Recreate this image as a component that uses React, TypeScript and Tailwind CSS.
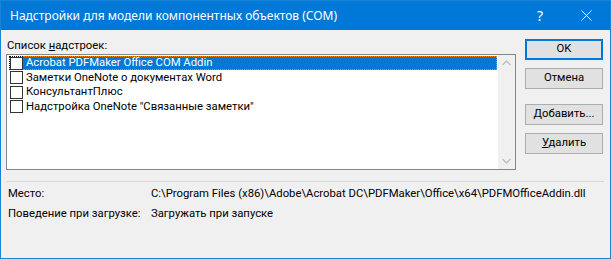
import React from "react";

const font = { fontFamily: 'Roboto, "Noto Sans", "Liberation Sans", sans-serif' };
const titleFont = { fontFamily: '"Noto Sans", "Liberation Sans", sans-serif' };

function Check() {
  return <div className="w-[13px] h-[13px] border border-[#333333] bg-white shrink-0" />;
}

function Btn({ children, def }: { children: React.ReactNode; def?: boolean }) {
  return (
    <div
      className={
        "w-[78px] h-[21px] flex items-center justify-center bg-[#e1e1e1] text-black whitespace-nowrap " +
        (def ? "border-2 border-[#0078d7]" : "border border-[#adadad]")
      }
    >
      {children}
    </div>
  );
}

export default function App() {
  const items = [
    "Заметки OneNote о документах Word",
    "КонсультантПлюс",
    'Надстройка OneNote "Связанные заметки"',
  ];
  return (
    <div
      className="w-[611px] h-[259px] border border-[#1883d7] bg-[#f0f0f0] flex flex-col overflow-hidden text-[11.3px] text-black whitespace-nowrap"
      style={font}
    >
      {/* Title bar */}
      <div className="h-[29px] bg-[#0078d7] flex items-center text-white shrink-0" style={titleFont}>
        <div className="pl-[9px] text-[12px] leading-[16px] pt-[1px]">
          Надстройки для модели компонентных объектов (COM)
        </div>
        <div className="flex-1" />
        <div className="w-[46px] h-[29px] flex items-center justify-center text-[14px]">?</div>
        <div className="w-[46px] h-[29px] flex items-center justify-center mr-[1px]">
          <svg width="11" height="11" viewBox="0 0 11 11">
            <path d="M0.5 0.5 L10.5 10.5 M10.5 0.5 L0.5 10.5" stroke="white" strokeWidth="1" />
          </svg>
        </div>
      </div>

      {/* Body */}
      <div className="flex pl-[5px] pt-[8px] shrink-0">
        <div className="flex flex-col">
          <div className="h-[16px] leading-[16px] pl-[1px]">
            Список <span className="underline">н</span>адстроек:
          </div>
          <div className="w-[510px] h-[116px] border border-[#828790] bg-white flex">
            <div className="flex-1 pt-[1px] pl-[2px] flex flex-col">
              <div className="h-[14.5px] flex items-center">
                <div className="h-[14px] flex items-center border border-dotted border-black border-r-0">
                  <Check />
                </div>
                <div className="flex-1 h-[14px] bg-[#0078d7] text-white flex items-center pl-[3px] border border-dotted border-[#ff8c00] border-l-0 leading-[12px] mr-[1px]">
                  Acrobat PDFMaker Office COM Addin
                </div>
              </div>
              {items.map((t) => (
                <div key={t} className="h-[14.5px] flex items-center">
                  <div className="pl-[1px]">
                    <Check />
                  </div>
                  <div className="pl-[3px] leading-[14px]">{t}</div>
                </div>
              ))}
            </div>
            <div className="w-[17px] bg-[#f0f0f0] flex flex-col items-center justify-between py-[5px]">
              <svg width="9" height="6" viewBox="0 0 9 6">
                <path d="M0.5 5 L4.5 1 L8.5 5" stroke="#c0c0c0" strokeWidth="1.5" fill="none" />
              </svg>
              <svg width="9" height="6" viewBox="0 0 9 6">
                <path d="M0.5 1 L4.5 5 L8.5 1" stroke="#c0c0c0" strokeWidth="1.5" fill="none" />
              </svg>
            </div>
          </div>
        </div>
        <div className="flex flex-col ml-[9px] pt-[1px]">
          <Btn def>OK</Btn>
          <div className="h-[8px]" />
          <Btn>Отмена</Btn>
          <div className="h-[15px]" />
          <Btn>
            <span>
              <span className="underline">Д</span>обавить...
            </span>
          </Btn>
          <div className="h-[8px]" />
          <Btn>
            <span>
              <span className="underline">У</span>далить
            </span>
          </Btn>
        </div>
      </div>

      {/* Separator */}
      <div className="mx-[6px] mt-[11px] h-px bg-[#d7d7d7] shrink-0" />

      {/* Info */}
      <div className="flex flex-col pl-[7px] pt-[2px] shrink-0">
        <div className="flex h-[20px] items-center">
          <div className="w-[143px] shrink-0">Место:</div>
          <div className="shrink-0">C:\Program Files (x86)\Adobe\Acrobat DC\PDFMaker\Office\x64\PDFMOfficeAddin.dll</div>
        </div>
        <div className="flex h-[20px] items-center">
          <div className="w-[143px] shrink-0">Поведение при загрузке:</div>
          <div className="shrink-0">Загружать при запуске</div>
        </div>
      </div>
    </div>
  );
}
